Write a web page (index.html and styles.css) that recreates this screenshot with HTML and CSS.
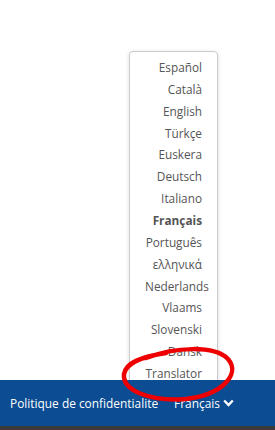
FILE: index.html
```html
<html>
<head>
  <meta charset="UTF-8">
  <title>Langues</title>
  <link rel="stylesheet" href="styles.css">
</head>
<body>

<div class="page">

  <section class="content"></section>

  <ul class="menu">
    <li>Español</li>
    <li>Català</li>
    <li>English</li>
    <li>Türkçe</li>
    <li>Euskera</li>
    <li>Deutsch</li>
    <li>Italiano</li>
    <li class="current">Français</li>
    <li>Português</li>
    <li>ελληνικά</li>
    <li>Nederlands</li>
    <li>Vlaams</li>
    <li>Slovenski</li>
    <li>Dansk</li>
    <li>Translator</li>
  </ul>

  <footer>
    <a class="link" href="#">Politique de confidentialite</a>
    <a class="lang" href="#">Français
      <svg width="11" height="8" viewBox="0 0 11 8"><polyline points="1.2,1.5 5.5,6 9.8,1.5" fill="none" stroke="#fff" stroke-width="2.4"/></svg>
    </a>
  </footer>
  <div class="strip"></div>

  <svg class="mark" width="275" height="430" viewBox="0 0 275 430">
    <path d="M146 358 C175 347, 214 345, 228 359 C241 374, 222 395, 186 399 C152 402, 122 391, 124 374 C126 363, 140 357, 166 353" fill="none" stroke="#ee0000" stroke-width="4.5" stroke-linecap="round"/>
  </svg>

</div>

</body>
</html>
```

FILE: styles.css
```css
body { margin: 0; padding: 0; background: #fff; font: 12px/20px "Open Sans", sans-serif; }
.page { position: relative; height: 430px; display: flex; flex-direction: column; overflow: hidden; }
.content { flex: 1; }

.menu {
  position: absolute;
  z-index: 1;
  left: 129px;
  top: 51px;
  width: 57px;
  margin: 0;
  padding: 5px 15px 0 15px;
  list-style: none;
  background: #fff;
  border: 1px solid #ccc;
  border-radius: 4px;
  box-shadow: 0 1px 4px rgba(0,0,0,0.15);
  color: #555;
  font-size: 11.8px;
}
.menu li {
  text-align: right;
  line-height: 21.86px;
  white-space: nowrap;
}
.menu li.current { font-weight: bold; }

footer {
  position: relative;
  z-index: 2;
  height: 46px;
  background: #0b4c92;
  display: flex;
  align-items: center;
  padding: 0 0 0 10px;
  font-size: 11.9px;
}
footer a { color: #fff; text-decoration: none; }
footer .lang { margin-left: 16px; display: flex; align-items: center; gap: 3px; }
.strip { height: 4px; background: #3b3b3b; position: relative; z-index: 2; }

.mark { position: absolute; left: 0; top: 0; z-index: 3; pointer-events: none; }
```
